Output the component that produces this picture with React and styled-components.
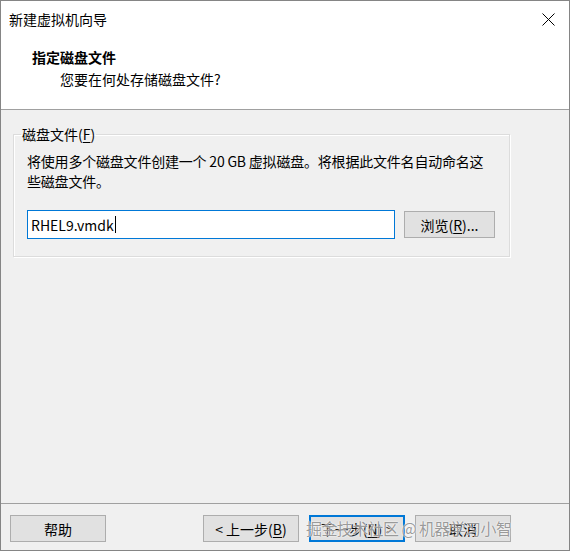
import React from 'react'
import styled, { createGlobalStyle } from 'styled-components'

const GlobalStyle = createGlobalStyle`
  html, body {
    margin: 0;
    padding: 0;
    background: #ffffff;
  }
  body {
    font-family: "Noto Sans CJK SC", "Noto Sans", sans-serif;
    font-size: 14px;
    color: #000;
  }
`

const Window = styled.div`
  position: relative;
  width: 570px;
  height: 551px;
  box-sizing: border-box;
  border: 1px solid #858585;
  display: flex;
  flex-direction: column;
  background: #f0f0f0;
  overflow: hidden;
`

const TitleBar = styled.div`
  height: 38px;
  background: #fff;
  display: flex;
  align-items: center;
  justify-content: space-between;
  padding: 0 14px 2px 8px;
  font-size: 14px;
  line-height: 1;
  box-sizing: border-box;
`

const CloseIcon = styled.svg`
  width: 13px;
  height: 13px;
  margin-top: 1px;
`

const Header = styled.div`
  height: 71px;
  background: #fff;
  border-bottom: 1px solid #a0a0a0;
  display: flex;
  flex-direction: column;
  padding: 7px 0 0 31px;
  box-sizing: border-box;
`

const HeaderTitle = styled.div`
  font-weight: 700;
  font-size: 14px;
  line-height: 22px;
`

const HeaderSub = styled.div`
  font-size: 14px;
  line-height: 22px;
  padding-left: 28px;
`

const Body = styled.div`
  flex: 1;
  padding: 15px 59px 0 12px;
`

const Group = styled.fieldset`
  margin: 0;
  padding: 8px 14px 17px 13px;
  border: 1px solid #dcdcdc;
  box-shadow: inset 1px 1px 0 #fff, 1px 1px 0 #fff;
  min-width: 0;
`

const Legend = styled.legend`
  padding: 0 1px;
  margin-left: -6px;
  font-size: 14px;
  line-height: 18px;
`

const Underline = styled.span`
  text-decoration: underline;
  text-underline-offset: 2px;
`

const Description = styled.p`
  margin: 0;
  font-size: 14px;
  line-height: 20px;
  letter-spacing: -0.2px;
`

const FileRow = styled.div`
  display: flex;
  align-items: center;
  gap: 9px;
  margin-top: 19px;
`

const FileInput = styled.div`
  flex: 1;
  height: 29px;
  box-sizing: border-box;
  border: 1px solid #0078d7;
  background: #fff;
  display: flex;
  align-items: center;
  padding-left: 3px;
  font-size: 14px;
`

const Caret = styled.span`
  display: inline-block;
  width: 1px;
  height: 17px;
  background: #000;
  margin-left: 1px;
`

const Button = styled.div`
  width: ${p => p.$w || 96}px;
  height: 27px;
  box-sizing: border-box;
  background: #e1e1e1;
  border: ${p => (p.$focused ? '2px solid #0078d7' : '1px solid #adadad')};
  display: flex;
  align-items: center;
  justify-content: center;
  font-size: 14px;
  white-space: nowrap;
`

const Footer = styled.div`
  height: 47px;
  border-top: 1px solid #a0a0a0;
  display: flex;
  align-items: flex-start;
  padding: 11px 0 0 9px;
  box-sizing: border-box;
`

const Spacer = styled.div`
  flex: 1;
`

const NavGroup = styled.div`
  display: flex;
  gap: 10px;
  margin-right: 58px;
`

const Watermark = styled.div`
  position: absolute;
  left: 305px;
  top: 515px;
  font-size: 16px;
  line-height: 24px;
  color: rgba(110, 110, 110, 0.7);
  text-shadow: 0 0 1px #fff, 0 0 2px #fff;
  letter-spacing: -0.6px;
  pointer-events: none;
  white-space: nowrap;
`

export default function App() {
  return (
    <>
      <GlobalStyle />
      <Window>
        <TitleBar>
          <span>新建虚拟机向导</span>
          <CloseIcon viewBox="0 0 13 13">
            <path d="M0.5 0.5 L12.5 12.5 M12.5 0.5 L0.5 12.5" stroke="#000" strokeWidth="1" fill="none" />
          </CloseIcon>
        </TitleBar>
        <Header>
          <HeaderTitle>指定磁盘文件</HeaderTitle>
          <HeaderSub>您要在何处存储磁盘文件?</HeaderSub>
        </Header>
        <Body>
          <Group>
            <Legend>
              磁盘文件(<Underline>F</Underline>)
            </Legend>
            <Description>
              将使用多个磁盘文件创建一个 20 GB 虚拟磁盘。将根据此文件名自动命名这些磁盘文件。
            </Description>
            <FileRow>
              <FileInput>
                RHEL9.vmdk<Caret />
              </FileInput>
              <Button $w={91}>
                浏览(<Underline>R</Underline>)...
              </Button>
            </FileRow>
          </Group>
        </Body>
        <Footer>
          <Button>帮助</Button>
          <Spacer />
          <NavGroup>
            <Button>
              &lt; 上一步(<Underline>B</Underline>)
            </Button>
            <Button $focused>
              下一步(<Underline>N</Underline>) &gt;
            </Button>
            <Button>取消</Button>
          </NavGroup>
        </Footer>
        <Watermark>掘金技术社区 @ 机器学习小智</Watermark>
      </Window>
    </>
  )
}
